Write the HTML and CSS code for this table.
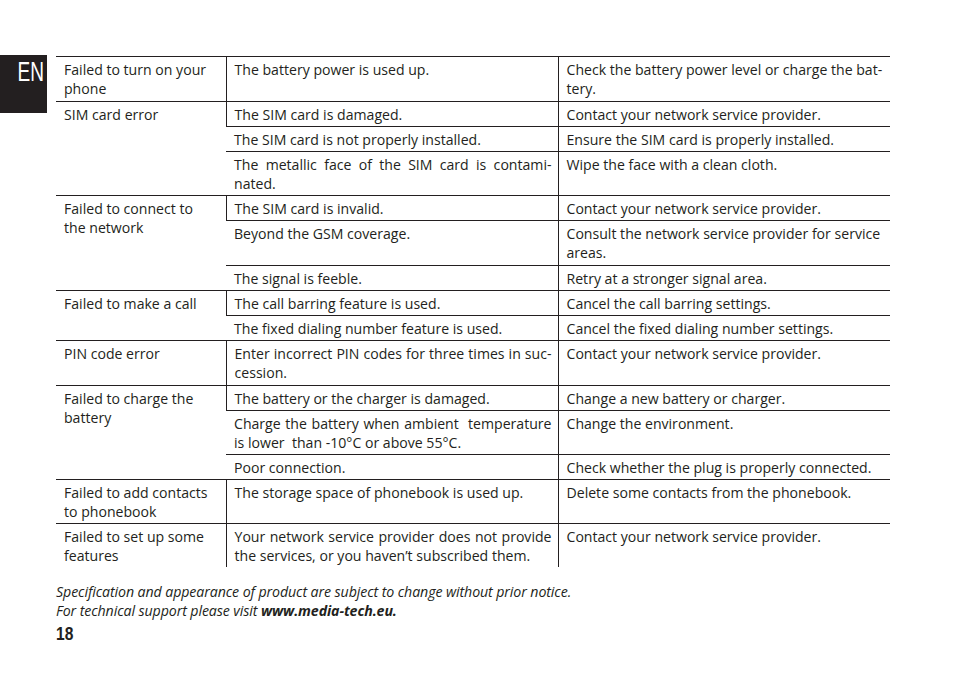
FILE: index.html
```html
<!DOCTYPE html>
<html lang="en">
<head>
<meta charset="utf-8">
<title>Troubleshooting</title>
<link rel="stylesheet" href="styles.css">
</head>
<body>
<div class="page">
  <aside class="side"><div class="lang"><span class="lang-text">EN</span></div></aside>
  <main class="main">
    <table class="trouble">
      <colgroup><col class="c1"><col class="c2"><col class="c3"></colgroup>
      <tbody>
        <tr class="tall"><td>Failed to turn on your phone</td><td>The battery power is used up.</td><td>Check the battery power level or charge the bat-<br>tery.</td></tr>
        <tr><td rowspan="3">SIM card error</td><td>The SIM card is damaged.</td><td>Contact your network service provider.</td></tr>
        <tr><td>The SIM card is not properly installed.</td><td>Ensure the SIM card is properly installed.</td></tr>
        <tr><td><span class="jl">The metallic face of the SIM card is contami-</span>nated.</td><td>Wipe the face with a clean cloth.</td></tr>
        <tr><td rowspan="3">Failed to connect to the network</td><td>The SIM card is invalid.</td><td>Contact your network service provider.</td></tr>
        <tr class="tall"><td>Beyond the GSM coverage.</td><td>Consult the network service provider for service areas.</td></tr>
        <tr><td>The signal is feeble.</td><td>Retry at a stronger signal area.</td></tr>
        <tr><td rowspan="2">Failed to make a call</td><td>The call barring feature is used.</td><td>Cancel the call barring settings.</td></tr>
        <tr><td>The fixed dialing number feature is used.</td><td>Cancel the fixed dialing number settings.</td></tr>
        <tr class="tall"><td>PIN code error</td><td><span class="jl">Enter incorrect PIN codes for three times in suc-</span>cession.</td><td>Contact your network service provider.</td></tr>
        <tr><td rowspan="3">Failed to charge the battery</td><td>The battery or the charger is damaged.</td><td>Change a new battery or charger.</td></tr>
        <tr><td><span class="jl">Charge the battery when ambient&nbsp; temperature</span>is lower&nbsp; than -10°C or above 55°C.</td><td>Change the environment.</td></tr>
        <tr><td>Poor connection.</td><td>Check whether the plug is properly connected.</td></tr>
        <tr><td>Failed to add contacts to phonebook</td><td>The storage space of phonebook is used up.</td><td>Delete some contacts from the phonebook.</td></tr>
        <tr class="last"><td>Failed to set up some features</td><td><span class="jl">Your network service provider does not provide</span>the services, or you haven’t subscribed them.</td><td>Contact your network service provider.</td></tr>
      </tbody>
    </table>
    <p class="note">Specification and appearance of product are subject to change without prior notice.<br>For technical support please visit <b>www.media-tech.eu.</b></p>
    <div class="pagenum"><span class="pagenum-text">18</span></div>
  </main>
</div>
</body>
</html>
```

FILE: styles.css
```css
html, body {
  margin: 0;
  padding: 0;
  background: #fff;
}
body {
  font-family: "Open Sans", "Noto Sans", sans-serif;
  color: #231f20;
  width: 954px;
  height: 678px;
  overflow: hidden;
}
.page {
  display: flex;
  align-items: flex-start;
}
.side {
  width: 47px;
  flex: none;
  margin-top: 55px;
}
.lang {
  background: #231f20;
  color: #fff;
  height: 58px;
  box-sizing: border-box;
  padding: 1px 3px 0 0;
  text-align: right;
  font-family: "Liberation Sans", sans-serif;
  font-size: 28px;
  line-height: 32px;
}
.lang-text {
  display: inline-block;
  transform: scaleX(0.68);
  transform-origin: right center;
}
.main {
  padding-left: 9px;
  padding-top: 56px;
}
.trouble {
  border-collapse: collapse;
  width: 834px;
  table-layout: fixed;
  font-size: 14.1px;
  line-height: 19px;
}
.c1 { width: 170px; }
.c2 { width: 332px; }
.c3 { width: 332px; }
.trouble td {
  border-top: 1px solid #231f20;
  border-bottom: 1px solid #231f20;
  border-left: 1px solid #231f20;
  padding: 3px 6px 2px 8px;
  vertical-align: top;
  text-align: left;
}
.trouble tr > td:first-child {
  border-left: none;
}
.trouble td[rowspan] + td {
  border-left: 1px solid #231f20;
}
.trouble td[rowspan], .trouble tr > td:first-child:not(:nth-last-child(2)) {
  padding-right: 14px;
}
.trouble tr.tall td {
  padding-bottom: 3px;
}
.trouble tr.last td {
  border-bottom: none;
}
.jl {
  display: block;
  text-align: justify;
  text-align-last: justify;
}
.note {
  margin: 15px 0 0;
  font-style: italic;
  font-size: 14.2px;
  line-height: 19px;
  letter-spacing: -0.1px;
}
.note b {
  font-weight: 700;
}
.pagenum {
  margin-top: 3px;
  font-family: "Liberation Sans", sans-serif;
  font-weight: 700;
  font-size: 19px;
  line-height: 22px;
}
.pagenum-text {
  display: inline-block;
  transform: scaleX(0.82);
  transform-origin: left center;
}
```
